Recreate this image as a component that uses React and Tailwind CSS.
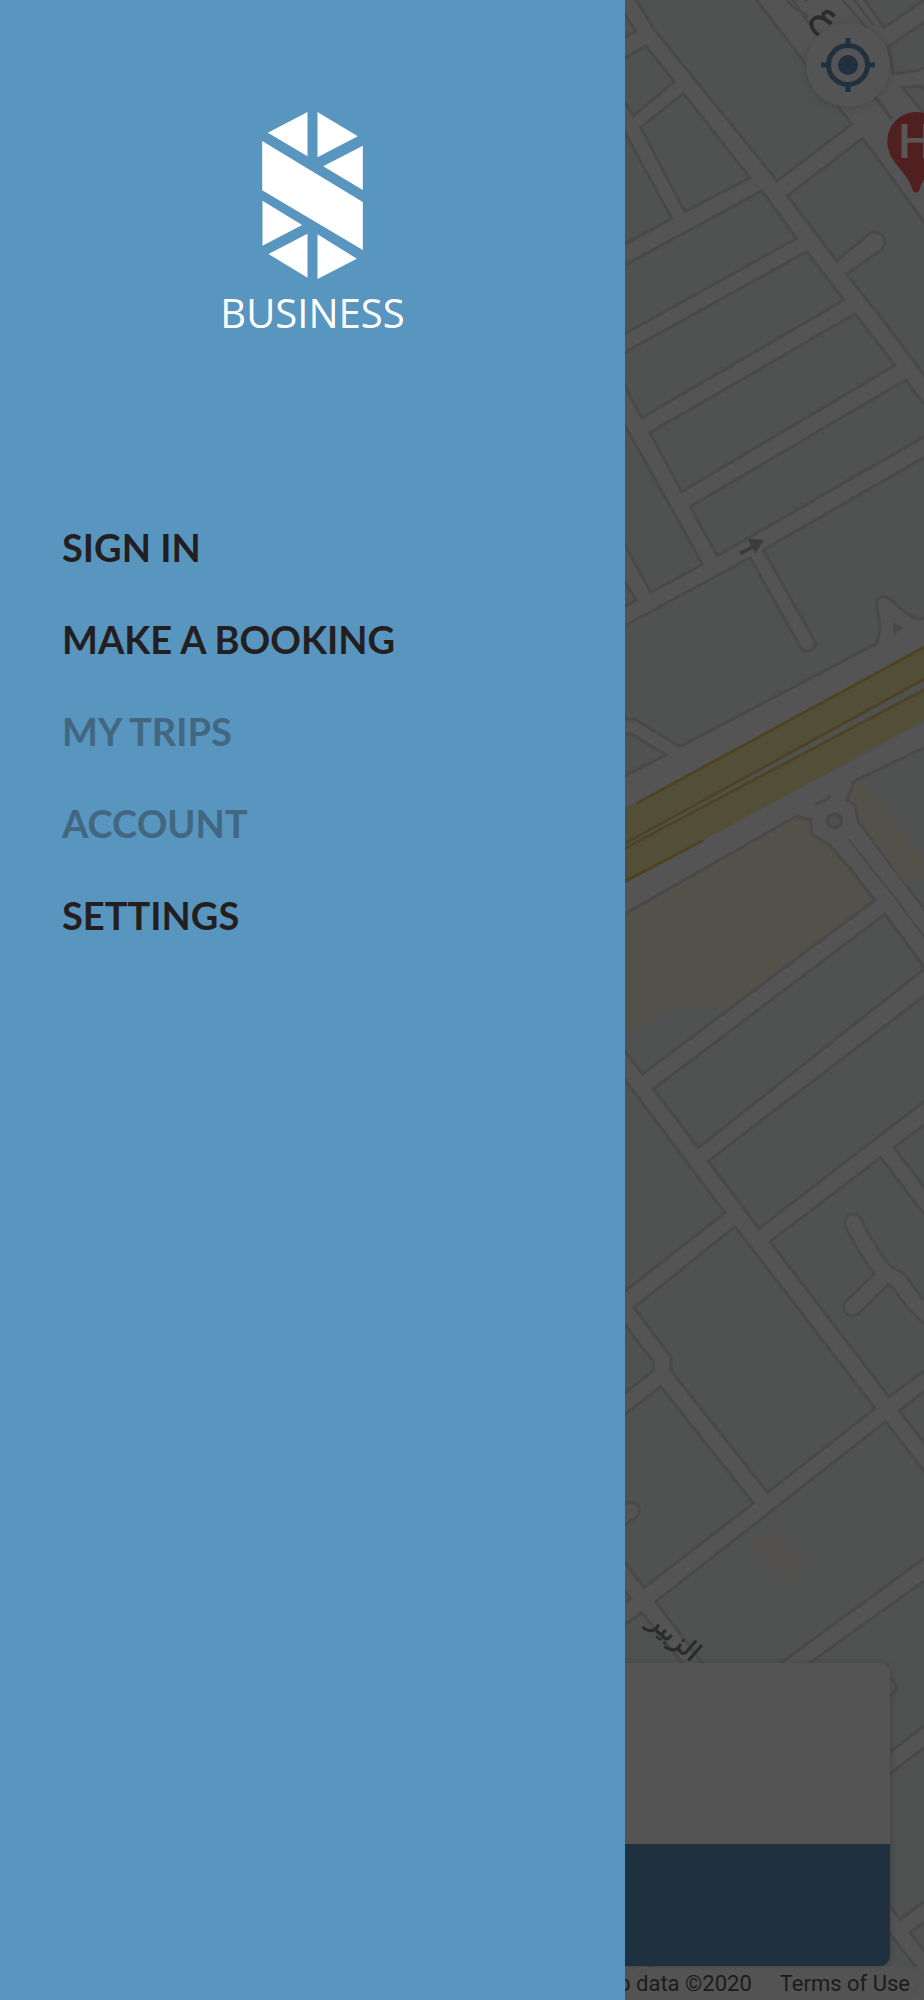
import React from "react";

const MENU = [
  { label: "SIGN IN" },
  { label: "MAKE A BOOKING" },
  { label: "MY TRIPS", disabled: true },
  { label: "ACCOUNT", disabled: true },
  { label: "SETTINGS" },
];

// City blocks, three map units per pixel.
const BLOCKS = [
  "M0 20L47 93L0 120Z",
  "M40 -15L100 85L472 543L695 373L395 -20Z",
  "M0 183L77 137L163 245L40 347L-10 270Z",
  "M190 280L390 533L195 635L62 383Z",
  "M0 370L155 655L0 740Z",
  "M0 803L425 573L530 715L0 1010Z",
  "M560 755L672 900L65 1253L0 1130L0 1065Z",
  "M502 587L728 415L930 690L930 1150L785 955L680 823L785 749A31 31 0 0 0 750 699L650 783Z",
  "M720 -20L793 83L940 -20Z",
  "M805 140L930 55L930 195L892 212L820 222Z",
  "M848 262L902 258L940 300L930 365Z",
  "M705 942L825 1095L185 1475L90 1298Z",
  "M857 1140L930 1235L930 1300L292 1667L210 1520Z",
  "M0 1250L248 1693L93 1777L0 1610Z",
  "M0 1725L50 1800L0 1828Z",
  "M0 1885L390 1673L545 1948A28 28 0 0 0 588 1930L430 1650L930 1362L930 1848L898 1858Q852 1842 825 1810Q790 1778 773 1798Q768 1815 774 1840Q786 1890 770 1930L180 2240L45 2158L20 2158L0 2120Z",
  "M0 2210L32 2200L138 2265L0 2335Z",
  "M703 2343L930 2235L930 2750L715 2465L705 2415L682 2400Z",
  "M795 2742L915 2905L235 3443L100 3267Z",
  "M265 3483L930 2975L930 3290L417 3685Z",
  "M0 3220L315 3638L0 3885Z",
  "M822 3442L930 3362L930 3585Z",
  "M782 3473L930 3665L930 4100L807 4190L450 3725Z",
  "M345 3680L765 4225L443 4477L153 4112L153 4070L42 3923Z",
  "M0 3955L100 4085L100 4112L0 4190Z",
  "M122 4160L400 4510L72 4762L0 4670L0 4255Z",
  "M838 4233L930 4160L930 4350Z",
  "M797 4265L930 4437L930 4662L440 5020L270 5020L107 4805Z",
  "M0 4760L33 4795L0 4820Z",
  "M0 4885L65 4838L205 5010L0 5010Z",
  "M930 4730L540 5010L700 5335L812 5255L930 5164Z",
  "M780 5343L930 5230L930 5692L840 5758L780 5680Z",
  "M870 5798L930 5755L930 5875Z",
  "M700 5660L910 5930L850 6020L0 6020L0 5960L300 5760Z",
];

const SAND = "M0 2750L530 2448L572 2460L575 2502L628 2535L690 2605L765 2700L68 3222L0 3135Z";

const LANES = [
  "M700 3668Q725 3722 765 3780Q785 3815 815 3830Q840 3840 855 3870L885 3910L940 3960",
  "M800 3822L697 3922",
  "M-20 4565L32 4532",
  "M770 5060L802 5062",
];

function CityMap() {
  return (
    <svg
      aria-hidden="true"
      viewBox="15 0 897 6000"
      preserveAspectRatio="xMinYMin slice"
      className="absolute inset-0 h-full w-full bg-[#545454]"
    >
      <g fill="#4f5250" stroke="#494949" strokeWidth="9">
        {BLOCKS.map((d) => (
          <path key={d} d={d} />
        ))}
      </g>
      <path d={SAND} fill="#53514a" />
      <path d="M0 3112L120 3040Q165 3022 195 3003Q220 3022 250 3026L322 3031L68 3222L0 3135Z" fill="#4f5250" />
      <path d={SAND} fill="none" stroke="#494949" strokeWidth="9" />
      <path d="M706 2345L735 2352L790 2420L930 2600L930 2615L868 2645L862 2660L720 2464L709 2413L687 2398Z" fill="#53514a" />
      <path d="M385 4630L465 4570L575 4695L495 4760Z" fill="#525150" />

      <g fill="none" strokeLinecap="round" strokeLinejoin="round">
        {LANES.map((d) => (
          <path key={d} d={d} stroke="#494949" strokeWidth="60" />
        ))}
        {LANES.map((d) => (
          <path key={d} d={d} stroke="#545454" strokeWidth="44" />
        ))}
      </g>

      <path d="M0 2432L930 1932L930 2160L0 2650Z" fill="#4f5250" />
      <path d="M0 2432L930 1932L930 2028L0 2537Z" fill="#534e38" />
      <path d="M0 2552L930 2060L930 2150L400 2440L0 2650Z" fill="#534e38" />
      <g fill="none" stroke="#4f4223" strokeWidth="8">
        <path d="M50 2410L930 1932" />
        <path d="M0 2539L930 2028" />
        <path d="M0 2552L930 2060" />
        <path d="M0 2652L250 2521" />
      </g>

      <path d="M820 1865L850 1884L820 1905Z" fill="#48494a" />
      <path d="M627 2447L650 2441L663 2453L662 2475L645 2484L625 2475L621 2460Z" fill="#504f4c" stroke="#474747" strokeWidth="9" />
      <g fill="none" stroke="#494949" strokeWidth="8">
        <path d="M585 2413L610 2403L632 2387" />
        <path d="M685 2517L830 2700L930 2835" strokeWidth="6" />
        <path d="M660 -10L745 90M695 -10L760 75M500 0L525 25L565 48M515 -5L570 75" />
        <path d="M765 290L815 357" strokeWidth="11" />
      </g>
      <path d="M358 1655L393 1637L382 1616L431 1620L407 1660L399 1647L362 1666Z" fill="#3a3d3f" />

      <g fill="#292c2d" stroke="#292c2d" strokeWidth="2" className="font-['DejaVu_Sans',sans-serif]">
        <text x="610" y="80" fontSize="108" textAnchor="middle" transform="rotate(53 610 62)">ع</text>
        <path d="M552 -4Q558 6 566 -4Z" />
        <text x="160" y="4935" fontSize="78" textAnchor="middle" direction="rtl" transform="rotate(41 160 4915)">الزبير</text>
      </g>

      <path
        d="M888 336A86 86 0 0 0 802 422C802 490 862 510 877 568Q880 578 888 578Q896 578 899 568C914 510 974 490 974 422A86 86 0 0 0 888 336Z"
        fill="#4f201f"
      />
      <text x="886" y="473" fontSize="146" fontWeight="500" textAnchor="middle" fill="#5a5656" className="font-[Roboto,sans-serif]">H</text>
    </svg>
  );
}

function Logo() {
  return (
    <svg aria-hidden="true" viewBox="187 66 302 501" className="h-[167px] w-[101px]" fill="#fff">
      <path d="M323 66V199L204 128Z" />
      <path d="M353 66V202L474 139Z" />
      <path d="M489 167V300L370 229Z" />
      <path d="M187 153L489 336V480L187 301Z" />
      <path d="M188 332L307 405L188 467Z" />
      <path d="M323 431V563L206 492Z" />
      <path d="M353 433L471 506L353 567Z" />
    </svg>
  );
}

export default function App() {
  return (
    <div className="flex min-h-screen bg-[#545454]">
      <aside className="flex w-[625px] max-w-[85%] shrink-0 flex-col bg-[#5895bf]">
        <header className="flex flex-col items-center pt-28 text-white">
          <Logo />
          <p className="mt-[7px] font-['Open_Sans',sans-serif] text-[40px] leading-[54px] font-normal">BUSINESS</p>
        </header>
        <nav aria-label="Main menu" className="mt-[185px] flex flex-col items-start gap-12 px-[62px]">
          {MENU.map((item) => (
            <button
              key={item.label}
              type="button"
              disabled={item.disabled}
              className="font-[Lato,sans-serif] text-[38px] leading-[44px] font-bold whitespace-nowrap text-[#231f20] disabled:text-[#426781]"
            >
              {item.label}
            </button>
          ))}
        </nav>
      </aside>

      <main className="relative min-w-0 flex-1 overflow-hidden">
        <CityMap />
        <div className="relative flex h-full flex-col">
          <div className="flex justify-end pt-[23px] pr-[34px]">
            <button
              type="button"
              aria-label="Show my location"
              className="flex size-[84px] items-center justify-center rounded-full bg-[#545454] shadow-[0_1px_8px_rgba(0,0,0,0.15)]"
            >
              <svg aria-hidden="true" viewBox="0 0 54 54" className="size-[54px]" fill="none" stroke="#1f313f" strokeWidth="5">
                <circle cx="27" cy="27" r="19.5" />
                <path d="M27 0V8M27 46V54M0 27H8M46 27H54" />
                <circle cx="27" cy="27" r="10" fill="#1f313f" stroke="none" />
              </svg>
            </button>
          </div>

          <section
            aria-label="Booking"
            className="mt-auto mr-[34px] overflow-hidden rounded-r-[10px] bg-[#545454] shadow-[0_1px_8px_rgba(0,0,0,0.2)]"
          >
            <div className="h-[181px]" />
            <div className="h-[122px] bg-[#1f313f]" />
          </section>

          <footer className="mt-px flex h-[33px] items-center justify-end gap-7 bg-[#545454]/80 pr-3.5 font-[Roboto,sans-serif] text-[22px] leading-[30px] whitespace-nowrap text-[#1c1c1c]">
            <span>Map data ©2020</span>
            <a href="#terms">Terms of Use</a>
          </footer>
        </div>
      </main>
    </div>
  );
}
